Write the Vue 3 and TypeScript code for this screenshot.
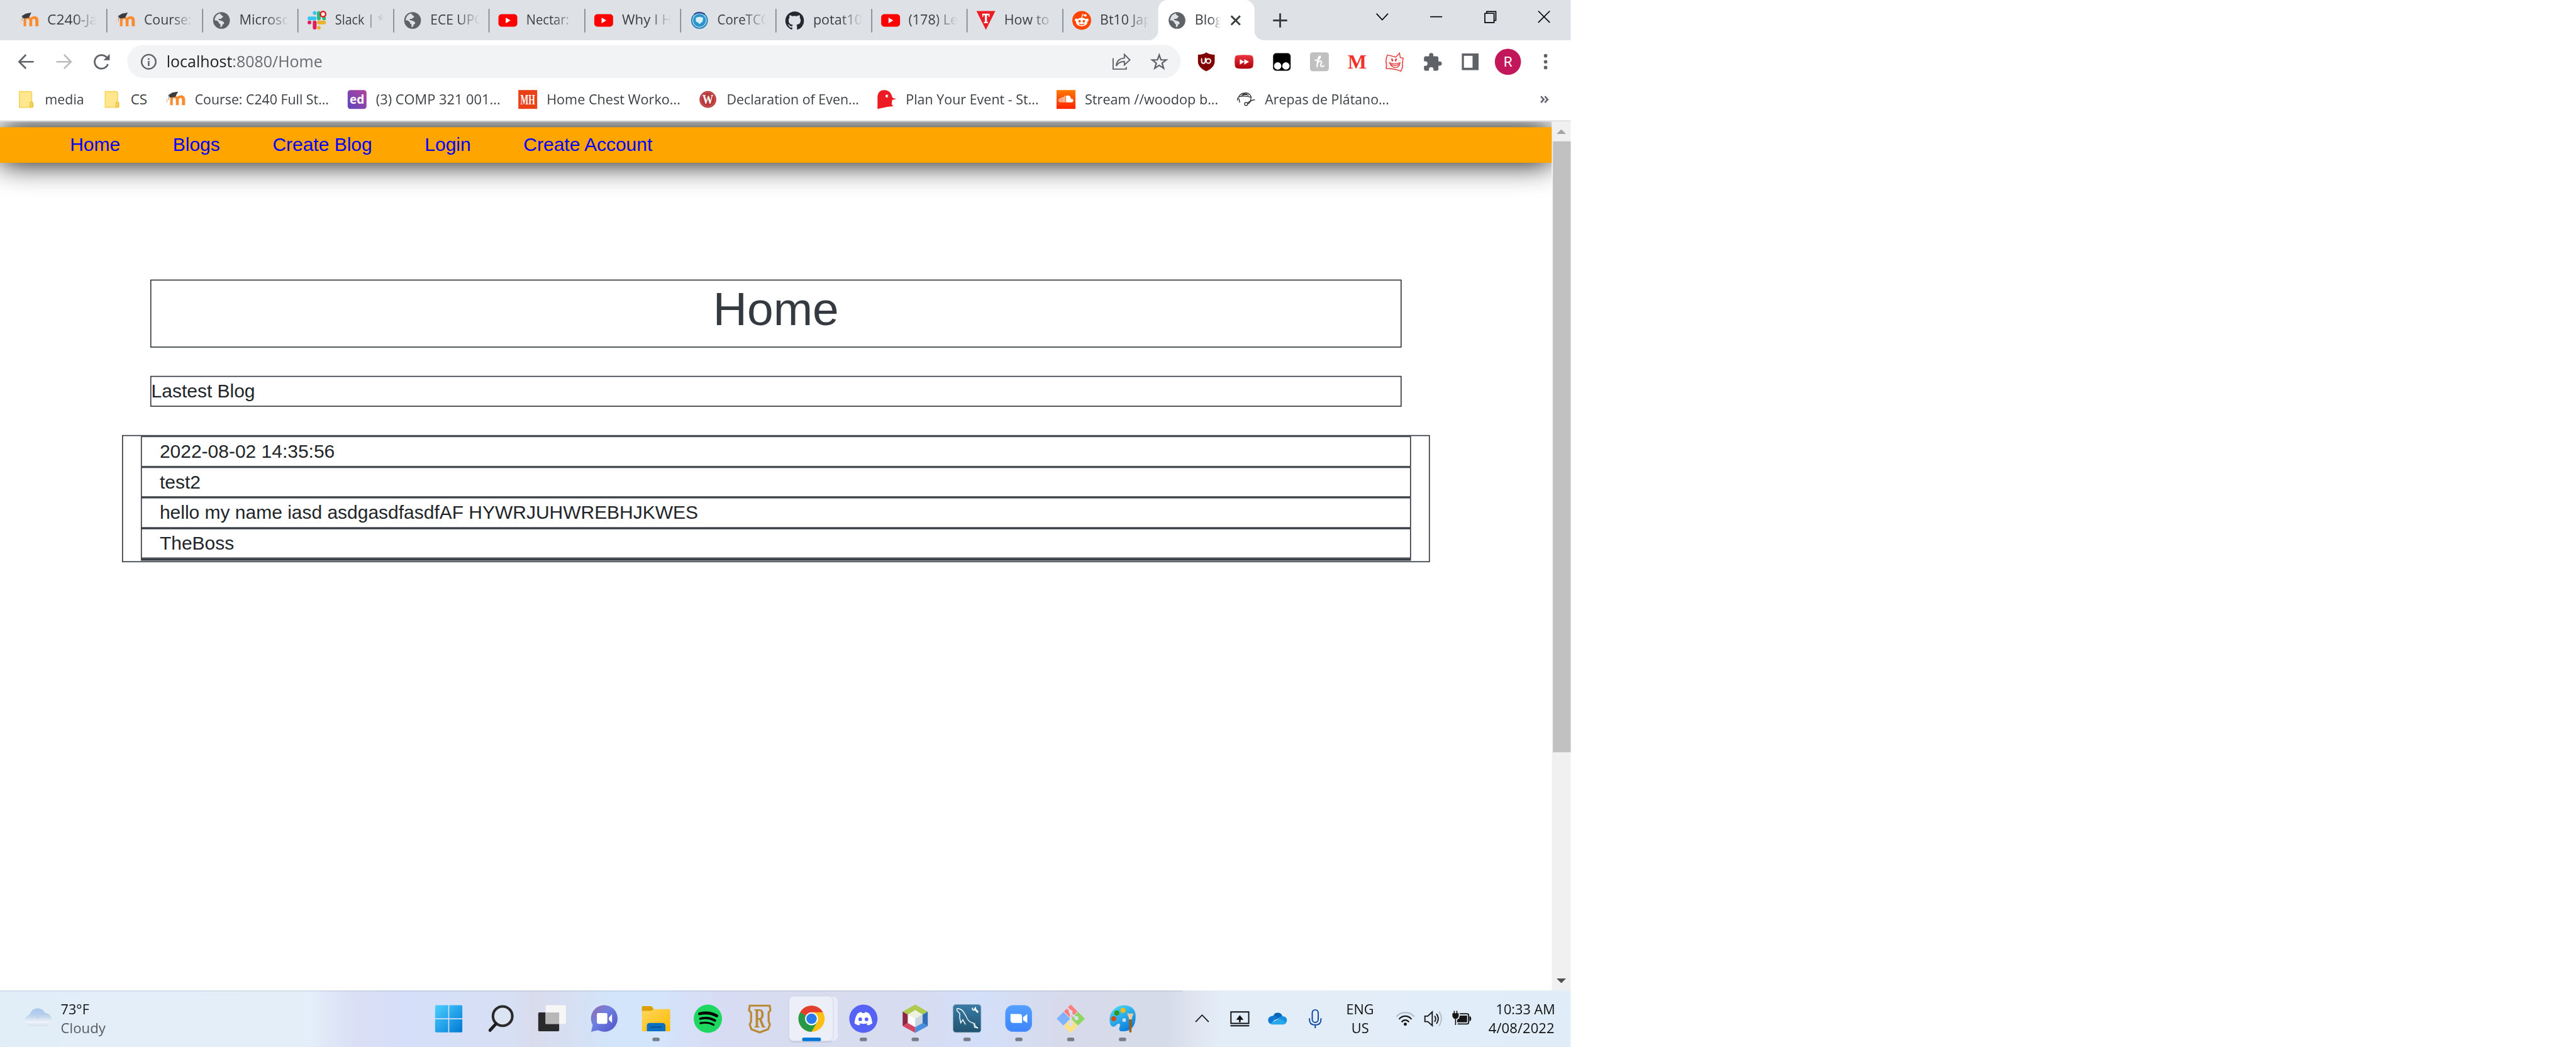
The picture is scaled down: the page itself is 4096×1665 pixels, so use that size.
<script setup lang="ts">
import type { ObjectDirective } from 'vue'

interface Tab { icon: string; title: string; w: number }
interface Bookmark { icon: string; title: string; cell: number; w: number }
interface TaskApp { icon: string; state: 'none' | 'open' | 'active' }

// Condenses a label horizontally so that it occupies the given width.
const fit = (el: HTMLElement, width: number) => {
  el.style.transform = 'none'
  const natural = el.offsetWidth
  if (natural) el.style.transform = `scaleX(${width / natural})`
}
const vFit: ObjectDirective<HTMLElement, number> = {
  mounted: (el, b) => fit(el, b.value),
}

const tabs: Tab[] = [
  { icon: 'moodle', title: 'C240-Ja', w: 96 },
  { icon: 'moodle', title: 'Course:', w: 91 },
  { icon: 'globe', title: 'Microso', w: 97 },
  { icon: 'slack', title: 'Slack | *', w: 94 },
  { icon: 'globe', title: 'ECE UPC', w: 100 },
  { icon: 'youtube', title: 'Nectar: ', w: 88 },
  { icon: 'youtube', title: 'Why I H', w: 96 },
  { icon: 'core', title: 'CoreTCO', w: 102 },
  { icon: 'github', title: 'potat10', w: 94 },
  { icon: 'youtube', title: '(178) Le', w: 95 },
  { icon: 'tee', title: 'How to', w: 86 },
  { icon: 'reddit', title: 'Bt10 Jap', w: 99 },
]

const bookmarks: Bookmark[] = [
  { icon: 'folder', title: 'media', cell: 164, w: 75 },
  { icon: 'folder', title: 'CS', cell: 122, w: 32 },
  { icon: 'moodle', title: 'Course: C240 Full St...', cell: 346, w: 256 },
  { icon: 'ed', title: '(3) COMP 321 001...', cell: 326, w: 238 },
  { icon: 'mh', title: 'Home Chest Worko...', cell: 344, w: 255 },
  { icon: 'wes', title: 'Declaration of Even...', cell: 342, w: 253 },
  { icon: 'bird', title: 'Plan Your Event - St...', cell: 342, w: 254 },
  { icon: 'cloud', title: 'Stream //woodop b...', cell: 344, w: 255 },
  { icon: 'arepa', title: 'Arepas de Plátano...', cell: 350, w: 237 },
]

const extensions = ['ublock', 'skip', 'tamper', 'honey', 'em', 'cat', 'puzzle', 'panel', 'avatar', 'dots']
const windowButtons = ['chevron', 'minimise', 'restore', 'close']
const links: string[] = ['Home', 'Blogs', 'Create Blog', 'Login', 'Create Account']
const blog: string[] = ['2022-08-02 14:35:56', 'test2', 'hello my name iasd asdgasdfasdfAF HYWRJUHWREBHJKWES', 'TheBoss']

const apps: TaskApp[] = [
  { icon: 'windows', state: 'none' },
  { icon: 'search', state: 'none' },
  { icon: 'taskview', state: 'none' },
  { icon: 'chat', state: 'none' },
  { icon: 'explorer', state: 'open' },
  { icon: 'spotify', state: 'none' },
  { icon: 'runeterra', state: 'none' },
  { icon: 'chrome', state: 'active' },
  { icon: 'discord', state: 'open' },
  { icon: 'netbeans', state: 'open' },
  { icon: 'mysql', state: 'open' },
  { icon: 'zoom', state: 'open' },
  { icon: 'git', state: 'open' },
  { icon: 'paint', state: 'open' },
]

// 36 x 36 glyphs
const small: Record<string, string> = {
  moodle: '<path d="M7 29V18q0-8 7.500-8Q18 10 20.500 13Q23 10 27.500 10Q35.500 10 35.500 18V29H29.500V19q0-4-3-4T23.500 19V29H18V19q0-4-3-4t-3 4V29z" fill="#fb8b2c"/><path d="M1 16v8" stroke="#fbd0b0" stroke-width="2.500"/><path d="M3 10L11 5L22 3L17 13L7 14.500z" fill="#3c3c3e"/><path d="M4.500 10v9" stroke="#999" stroke-width="1.300"/>',
  globe: '<circle cx="18" cy="18" r="16" fill="#5f6368"/><path d="M16 4.500c-6 1-11 6-11 13.500h4l4 3.500c0 3 2.500 3 3 4v5.500c3-.5 4-3 4-5.500 3 0 3.500-2 2.500-4-1-2-4-2.500-7-3.500-3-.8-4.500-2-2-3h3c1.500 0 1.500-2 3-2.500 2-1 2-2 0-3.500-2-1-4-2-3.500-4.500z" fill="#dee1e6"/><path d="M24 6c5 3 7.500 8 7 13-3 1-5-.5-5.500-3-3-.5-4-2-3-4 2-.5 2.500-3 1.500-6z" fill="#5f6368"/>',
  slack: '<g stroke-width="7.200" stroke-linecap="round"><path d="M4 14h10M14 4h.01" stroke="#36c5f0"/><path d="M22 4v10M32 14h.01" stroke="#2eb67d"/><path d="M22 22h10M22 32h.01" stroke="#ecb22e"/><path d="M14 22v10M4 22h.01" stroke="#e01e5a"/></g><circle cx="30" cy="6" r="5" fill="#fff" stroke="#e01e1e" stroke-width="3"/>',
  youtube: '<rect y="6" width="36" height="24" rx="6" fill="#f00"/><path d="M14 12.500L23 18L14 23.500z" fill="#fff"/>',
  core: '<circle cx="18" cy="18" r="16" fill="#1f7fb5"/><circle cx="18" cy="18" r="13" fill="#2a94cb" stroke="#b8dcee" stroke-width="1.500"/><path d="M11 13q7-4 14 0l-1 7-6 5-3-3-4-2z" fill="#d5f0fa"/><path d="M8 6q10-6 20 0" stroke="#2c4a90" stroke-width="3" fill="none"/>',
  github: '<path d="M18 1C8 1 0 9 0 18.700c0 7.800 5 14.300 12 16.700.9.100 1.200-.4 1.200-.9v-3.200c-5 1.100-6-2.300-6-2.300-.8-2-2-2.600-2-2.600-1.600-1 .1-1 .1-1 1.800.1 2.800 1.800 2.800 1.800 1.600 2.700 4.200 2 5.200 1.500.2-1.200.6-2 1.100-2.400-4-.4-8.200-2-8.200-8.700 0-2 .7-3.500 1.800-4.700-.2-.5-.8-2.300.2-4.700 0 0 1.500-.5 5 1.800a17 17 0 0 1 9 0c3.400-2.300 5-1.800 5-1.800 1 2.400.4 4.200.2 4.700 1.100 1.200 1.800 2.800 1.800 4.700 0 6.800-4.200 8.200-8.200 8.700.7.600 1.200 1.700 1.200 3.400v5c0 .5.300 1 1.200.9 7-2.400 12-9 12-16.700C36 9 28 1 18 1z" fill="#24292f"/>',
  tee: '<path d="M0 0H36L18 36z" fill="#ec1c24"/><path d="M11 5H25V11H23V8H20V21H22V23H14V21H16V8H13V11H11z" fill="#fff"/>',
  reddit: '<circle cx="18" cy="18" r="18" fill="#ff4500"/><ellipse cx="18" cy="21" rx="11" ry="8" fill="#fff"/><circle cx="7.500" cy="17" r="2.700" fill="#fff"/><circle cx="28.500" cy="17" r="2.700" fill="#fff"/><circle cx="25" cy="8.500" r="2.400" fill="#fff"/><path d="M18 13l1.500-6 5.500 1.200" stroke="#fff" stroke-width="1.600" fill="none"/><circle cx="14" cy="19.500" r="2.300" fill="#ff4500"/><circle cx="22" cy="19.500" r="2.300" fill="#ff4500"/><path d="M13 24.500q5 3.500 10 0" stroke="#ff4500" stroke-width="1.600" fill="none"/>',
  folder: '<path d="M5 3H26a2.500 2.500 0 0 1 2.500 2.500V23q2.500.5 2.500 4v3a3 3 0 0 1-3 3H5z" fill="#ffe68f" stroke="#f5d55c" stroke-width="2"/><path d="M25.500 31v-5q0-3 2.500-3t2.300 3v6H27q-1.500 0-1.500-2z" fill="#f9da66" stroke="#e6bd38" stroke-width="1.500"/>',
  ed: '<defs><linearGradient id="edg" x1="1" y1="0" x2="0" y2="1"><stop offset="0" stop-color="#b3429c"/><stop offset="1" stop-color="#5c46bd"/></linearGradient></defs><rect width="36" height="36" rx="5" fill="url(#edg)"/><text x="18" y="26.500" text-anchor="middle" font-size="23" font-weight="700" fill="#fff" textLength="28" lengthAdjust="spacingAndGlyphs">ed</text>',
  mh: '<rect width="36" height="36" fill="#ea4015"/><text x="18" y="27" text-anchor="middle" font-size="27" font-weight="700" font-family="Liberation Serif, serif" fill="#fff" textLength="28" lengthAdjust="spacingAndGlyphs">MH</text>',
  wes: '<circle cx="18" cy="18" r="16" fill="#b8393b"/><circle cx="18" cy="18" r="13.500" fill="none" stroke="#cf6d6e" stroke-width="1"/><text x="18" y="26.500" text-anchor="middle" font-size="25" font-weight="700" font-family="Liberation Serif, serif" fill="#fff" textLength="21" lengthAdjust="spacingAndGlyphs">W</text>',
  bird: '<path d="M0 36V12C1 4 6 0 12 0C19 0 24 3 26 8L29 15L36 17L28 19L27 27L30 31L20 32z" fill="#ed1c24"/><circle cx="18" cy="11.500" r="2.800" fill="#fff"/><path d="M19 11.500h2" stroke="#333" stroke-width="1.500"/>',
  cloud: '<defs><linearGradient id="scg" x1="0" y1="0" x2="0" y2="1"><stop offset="0" stop-color="#ff7800"/><stop offset="1" stop-color="#ff2300"/></linearGradient></defs><rect width="36" height="36" fill="url(#scg)"/><path d="M5 17v6M7.800 15v8.500M10.600 14v9.500M13.400 13v10.500M16 11v12.500" stroke="#fff" stroke-width="1.500"/><path d="M18 23.500V11q8-2.500 9.500 5.500Q32 16 32 20q0 3.500-3.500 3.500z" fill="#fff"/>',
  arepa: '<g fill="none" stroke="#222" stroke-width="1.500"><path d="M4 13q3-7 12-7.500T28 14q-11-4-24-1z"/><path d="M9 11q6-4 14-1M11 8.500q5-2.500 9-.5"/><path d="M4 14q-3 1-2.500 6M4 16l2 8M27 15v5q-2 5-6 6.500"/><circle cx="18" cy="26.500" r="3"/><path d="M21 25q3-5 14-6.500"/></g>',
  ublock: '<path d="M18 0Q24 4.500 34 4.500V17C34 27 25 33 18 36C11 33 2 27 2 17V4.500Q12 4.500 18 0z" fill="#800000"/><path d="M9 11.500v5.500q0 4 3.500 4t3.500-4v-5.500" fill="none" stroke="#fff" stroke-width="2.300"/><circle cx="22" cy="16.500" r="4.200" fill="none" stroke="#fff" stroke-width="2.300"/><path d="M17 10v7" stroke="#fff" stroke-width="2"/>',
  skip: '<defs><linearGradient id="skg" x1="0" y1="0" x2="0" y2="1"><stop offset="0" stop-color="#ee3540"/><stop offset="1" stop-color="#a90008"/></linearGradient></defs><path d="M6 5.500Q18 4 30 5.500Q35 6 35.500 11Q36.500 18 35.500 25Q35 30 30 30.700Q18 32 6 30.700Q1 30 .5 25Q-.5 18 .5 11Q1 6 6 5.500z" fill="url(#skg)"/><path d="M10 13L18.500 18L10 23.500zM18.500 13L27.500 18L18.500 23.500z" fill="#fff"/>',
  tamper: '<rect x="1.500" y="1.500" width="33.500" height="33.500" rx="6" fill="#000"/><circle cx="10.300" cy="26" r="7" fill="#fff"/><circle cx="26" cy="26" r="7" fill="#fff"/>',
  honey: '<rect width="36" height="36" rx="5" fill="#c0c0c0"/><path d="M10 15q7 0 9-4.500t-1.500-2.500q-3 4-4 19.500M13.500 23q3-7 6.500-6.500t1 5.500 2.500 5q2 0 3-1.500" fill="none" stroke="#fff" stroke-width="2.600" stroke-linecap="round"/>',
  em: '<text x="18" y="31.500" text-anchor="middle" font-size="38" font-weight="700" font-family="Liberation Serif, serif" fill="#f2302c" textLength="36" lengthAdjust="spacingAndGlyphs">M</text>',
  cat: '<path d="M4 5L20 9L27 1.500L28.500 10L34 11Q32 22 33 28L29.500 36Q18 31 1.500 31Q3 23 1 17Q1.500 10 4 5z" fill="#fbf3f3" stroke="#e03a3a" stroke-width="1.700"/><path d="M12 12l2 5M21 12l-2 5" stroke="#d22" stroke-width="2.500"/><path d="M8 20q9 4 20 0-2 9-8 9-8 0-12-9zM10 23q9 4 16 0" fill="none" stroke="#e03a3a" stroke-width="1.600"/>',
  puzzle: '<path transform="translate(-1.500 -.5) scale(1.620)" d="M20.500 11H19V7c0-1.100-.9-2-2-2h-4V3.500a2.500 2.500 0 0 0-5 0V5H4c-1.100 0-2 .9-2 2v3.800h1.500a2.700 2.700 0 0 1 0 5.400H2V20c0 1.100.9 2 2 2h3.800v-1.500a2.700 2.700 0 0 1 5.400 0V22H17c1.100 0 2-.9 2-2v-4h1.500a2.500 2.500 0 0 0 0-5z" fill="#5f6368"/>',
  panel: '<path d="M2 2H34V34H2zM6 6.500V29.500H22.500V6.500z" fill="#5f6368" fill-rule="evenodd"/>',
  dots: '<g fill="#5f6368"><circle cx="18" cy="6.500" r="3.400"/><circle cx="18" cy="18" r="3.400"/><circle cx="18" cy="29" r="3.400"/></g>',
  back: '<path d="M32.500 18H5M17.500 4.500L4.500 18L17.500 31" fill="none" stroke="#5f6368" stroke-width="3.200"/>',
  forward: '<path d="M3.500 18H31M18.500 4.500L31.500 18L18.500 31" fill="none" stroke="#babcbe" stroke-width="3.200"/>',
  reload: '<path d="M30 22.500A13 13 0 1 1 27.500 9.500" fill="none" stroke="#5f6368" stroke-width="3.300"/><path d="M33.500 3V15H21.500z" fill="#5f6368"/>',
  info: '<circle cx="18" cy="18" r="13.600" fill="none" stroke="#5f6368" stroke-width="2.900"/><path d="M18 16.500V26M18 11v3.500" stroke="#5f6368" stroke-width="3"/>',
  share: '<path d="M2 11V32H27V28" fill="none" stroke="#5f6368" stroke-width="2.300"/><path d="M8 26Q9 12 23.500 11V4L34 14.500L23.500 24V17.500Q13 17.500 8 26z" fill="none" stroke="#5f6368" stroke-width="2.300"/>',
  star: '<path d="M18 5L21.300 14.200L31.500 14.500L23.500 20.500L26.500 30.500L18 24.800L9.500 30.500L12.500 20.500L4.500 14.500L14.700 14.200z" fill="none" stroke="#5f6368" stroke-width="2.700"/>',
  chevron: '<path d="M7 12L18 24L29 12" fill="none" stroke="#000" stroke-width="2"/>',
  minimise: '<path d="M6.500 18H29.500" stroke="#000" stroke-width="2"/>',
  restore: '<path d="M8 11.500H25.500V29H8zM11.500 11V8H29V25H26" fill="none" stroke="#000" stroke-width="2"/>',
  close: '<path d="M7 7L29 29M29 7L7 29" stroke="#000" stroke-width="2"/>',
  cross: '<path d="M9.500 9.500L26.500 26.500M26.500 9.500L9.500 26.500" stroke="#3c4043" stroke-width="3.500"/>',
  plus: '<path d="M18 4.500V31.500M4.500 18H31.500" stroke="#3c4043" stroke-width="3.500"/>',
  more: '<path d="M11 12L16.500 18L11 24M18.500 12L24 18L18.500 24" fill="none" stroke="#5f6368" stroke-width="3"/>',
  tchevron: '<path d="M5.500 24L18 11L30.500 24" fill="none" stroke="#1b1b1b" stroke-width="2.200"/>',
  upload: '<path d="M1 5H35V27H1zM0 31.500H36" fill="none" stroke="#111" stroke-width="2.300"/><path d="M18 11L25 20H19.500V25H16.500V20H11z" fill="#111"/>',
  onedrive: '<path d="M10 13Q12 6 19 6.500Q26 7 27.500 14L14 20z" fill="#0364b8"/><path d="M8 12.500q6-2 10 2.500L5 28Q0 26 0 20.500Q0 14 8 12.500z" fill="#0f78d4"/><path d="M17 16l10-3q9 0 9 8.500l-2 5z" fill="#1490df"/><path d="M4 27L21 17.500L35 25q-1.500 4-6 4H7q-2 0-3-2z" fill="#28a8ea"/>',
  mic: '<rect x="12.300" y="1" width="11.400" height="24" rx="5.700" fill="none" stroke="#0b47a1" stroke-width="2.300"/><path d="M7 17v2.500Q7 30 18 30T29 19.500V17M18 30v6" fill="none" stroke="#0b47a1" stroke-width="2.300"/>',
  wifi: '<path d="M1 14Q8 6 18 6T35 14" fill="none" stroke="#b4bdc6" stroke-width="2.600"/><path d="M6 19Q11 13 18 13T30 19M11 24.500Q14 20.500 18 20.500T25 24.500" fill="none" stroke="#161616" stroke-width="2.600"/><circle cx="18" cy="28.500" r="3" fill="#161616"/>',
  sound: '<path d="M1.500 13H7L15.500 5V31L7 23.500H1.500zM20 12.500q4 5.500 0 11.500M23.500 8.500q7 9.500 0 19" fill="none" stroke="#161616" stroke-width="2.300"/><path d="M28.500 4q9 14 0 28" fill="none" stroke="#b4bdc6" stroke-width="2.300"/>',
  battery: '<path d="M3.500 3v6M8.500 3v6M6 16v14" stroke="#161616" stroke-width="2"/><path d="M0 7.500H12V13q-1 5-6 5T0 13z" fill="#161616"/><path d="M14 8.500H28q3 0 3 3V25q0 3-3 3H10" fill="none" stroke="#161616" stroke-width="2.300"/><path d="M14 12H28V25H9V20Q14 18 14 12zM32.500 13.500H34q2 1 2 4.500t-2 4.500h-1.500z" fill="#161616"/>',
}

// 54 x 54 taskbar glyphs
const large: Record<string, string> = {
  windows: '<defs><linearGradient id="wg" x1="0" y1="0" x2="1" y2="1"><stop offset="0" stop-color="#4bd0ff"/><stop offset="1" stop-color="#0078d4"/></linearGradient></defs><path d="M3 1H26V26H1V3Q1 1 3 1zM28 1H51Q53 1 53 3V26H28zM1 28H26V53H3Q1 53 1 51zM28 28H53V51Q53 53 51 53H28z" fill="url(#wg)"/>',
  search: '<ellipse cx="31" cy="22" rx="18.500" ry="18.500" fill="#dce4f3" stroke="#2a2a2a" stroke-width="5"/><path d="M18 37L7 49" stroke="#1d1d1d" stroke-width="6" stroke-linecap="round"/>',
  taskview: '<rect x="0" y="15" width="40" height="36" rx="2" fill="#2a2a2a"/><rect x="14" y="1" width="39" height="36" rx="2" fill="#f6f6f6"/><rect x="14" y="15" width="26" height="22" fill="#b8b8b8"/>',
  chat: '<defs><linearGradient id="chg" x1="0" y1="0" x2="1" y2="1"><stop offset="0" stop-color="#9a67a8"/><stop offset=".4" stop-color="#7080e0"/><stop offset="1" stop-color="#4f52c6"/></linearGradient></defs><path d="M27 1A25 25 0 0 1 27 52Q21 52 15 49L2 52L5 39A25.500 25.500 0 0 1 27 1z" fill="url(#chg)"/><rect x="13" y="16" width="20" height="21" rx="3" fill="#fff"/><path d="M36 25L42 18V35L36 29z" fill="#fff"/>',
  explorer: '<defs><linearGradient id="exg" x1="0" y1="0" x2="1" y2="1"><stop offset="0" stop-color="#ffd75e"/><stop offset="1" stop-color="#fdb900"/></linearGradient></defs><path d="M0 4Q0 3 2 3H17Q19 3 22 8V14H0z" fill="#dd9f00"/><path d="M0 12H17L23 8.500H52Q54 8.500 54 11V51H0z" fill="url(#exg)"/><path d="M9.500 51V40Q10 35 15 35H39Q44 35 45 40V51z" fill="#0b6fc2"/><path d="M17 43H38" stroke="#084b8a" stroke-width="2"/>',
  spotify: '<circle cx="27" cy="27" r="27" fill="#1ed760"/><g fill="none" stroke="#000" stroke-linecap="round"><path d="M11 17.500Q29 13 44 21.500" stroke-width="5.500"/><path d="M12.500 27Q28 23 40.500 30.500" stroke-width="4.500"/><path d="M13 35.500Q27 32.500 38 38.500" stroke-width="3.700"/></g>',
  runeterra: '<path d="M8 2H46L47.500 11L44 15V32L46.500 38L43 47L27 53L11 47L8 38L10.500 32V15L6.500 11z" fill="none" stroke="#b88a35" stroke-width="3.800"/><text x="27" y="44" text-anchor="middle" font-family="Liberation Serif, serif" font-size="54" font-weight="700" fill="#b88a35" textLength="21" lengthAdjust="spacingAndGlyphs">R</text>',
  chrome: '<circle cx="27" cy="27" r="25" fill="#fbc013"/><path d="M27 27L5.350 14.500A25 25 0 0 0 27 52L38 33z" fill="#279847"/><path d="M27 27L5.350 14.500A25 25 0 0 1 48.650 14.500H27z" fill="#e43e2f"/><circle cx="27" cy="27" r="12.500" fill="#fff"/><circle cx="27" cy="27" r="10" fill="#2a7bec"/>',
  discord: '<circle cx="27" cy="27" r="27" fill="#5662f6"/><path d="M16 17Q20 14.500 23.500 14L24.500 16H29.500L30.500 14Q34 14.500 38 17Q43.500 25 44 36Q39 39.500 35 39.500L33 36.500L36 34.500Q27 39 18 34.500L21 36.500L19 39.500Q15 39.500 10 36Q10.500 25 16 17z" fill="#fff"/><circle cx="21" cy="28" r="3.500" fill="#5662f6"/><circle cx="33" cy="28" r="3.500" fill="#5662f6"/>',
  netbeans: '<path d="M27 0L51 13.500L41 19L27 10.500L13 19L3 13.500z" fill="#b0c94f"/><path d="M3 13.500L13 19V35L3 41z" fill="#8b2846"/><path d="M3 41L13 35L27 43V54z" fill="#d34664"/><path d="M27 54V43L41 35L51 41z" fill="#498fdd"/><path d="M51 41L41 35V19L51 13.500z" fill="#326db7"/><path d="M27 10.500L41 19L27 27L13 19z" fill="#edf1df"/><path d="M13 19L27 27V43L13 35z" fill="#fff"/><path d="M41 19L27 27V43L41 35z" fill="#cad6e2"/>',
  mysql: '<defs><linearGradient id="mg" x1="0" y1="0" x2="0" y2="1"><stop offset="0" stop-color="#3a7ba5"/><stop offset="1" stop-color="#1f5470"/></linearGradient></defs><rect x=".5" y="0" width="53" height="53" rx="5" fill="url(#mg)" stroke="#7898ad"/><path d="M8 12Q6 6 12 8Q17 9 21 15L25 22Q29 33 38 35L42 37L40 39L48 45L41 43L43 39M8 12L13 17V25L15 35L19 29L24 38" fill="none" stroke="#fff" stroke-width="1.700"/><path d="M41 7L48 15" stroke="#fff" stroke-width="3.500" fill="none"/><path d="M37 6q0 5 4 4.500t1.500-6" stroke="#fff" stroke-width="2" fill="none"/>',
  zoom: '<defs><linearGradient id="zg" x1="0" y1="0" x2="0" y2="1"><stop offset="0" stop-color="#539fff"/><stop offset="1" stop-color="#3e86ff"/></linearGradient></defs><rect x="1" y="1" width="51" height="51" rx="15" fill="url(#zg)"/><path d="M11 18H28Q33 18 33 23V35H16Q11 35 11 30zM35 24L43 18V35L35 30z" fill="#fff"/>',
  git: '<path d="M27 0L40 13L27 26L14 13z" fill="#ff7d7d"/><path d="M41 14L54 27L41 40L28 27z" fill="#8fd661"/><path d="M27 28L40 41L27 54L14 41z" fill="#ffe27f"/><path d="M13 14L26 27L13 40L0 27z" fill="#7eb2ff"/><path d="M19 5L27 13V38M27 17L38 25" fill="none" stroke="#d9dfec" stroke-width="3"/><circle cx="27" cy="14" r="3.500" fill="#d9dfec"/><circle cx="27" cy="38" r="4" fill="#d9dfec"/><circle cx="38" cy="26" r="4" fill="#d9dfec"/>',
  paint: '<defs><linearGradient id="pg" x1="0" y1="0" x2=".6" y2="1"><stop offset="0" stop-color="#4fe2fb"/><stop offset="1" stop-color="#0d7ddb"/></linearGradient></defs><path d="M31 1Q52 3 52 22Q52 52 25 51Q19 50 21 44Q24 37 20 36Q16 37 13 41Q6 45 3 36Q0 22 8 12Q17 1 31 1zM30 26a3.500 3.500 0 1 0 .1 7a3.500 3.500 0 1 0-.1-7z" fill="url(#pg)" fill-rule="evenodd"/><circle cx="10" cy="27" r="4.800" fill="#d14b16"/><circle cx="16" cy="16" r="4.800" fill="#2f9a10"/><circle cx="28" cy="11" r="4.800" fill="#fdb813"/><path d="M35.500 17H48L45 25V28H39V25z" fill="#e8cba0"/><path d="M39.500 28H44.500L44 53H40z" fill="#a45c08"/>',
}
</script>

<template>
  <div class="viewport">
    <div class="screen">
      <header class="tabstrip">
        <div v-for="(t, i) in tabs" :key="i" class="tab" :class="{ last: i === tabs.length - 1 }">
          <svg class="ic" viewBox="0 0 36 36" v-html="small[t.icon]" />
          <span class="title"><span v-fit="t.w" class="fit">{{ t.title }}</span></span>
        </div>
        <div class="tab current">
          <svg class="ic" viewBox="0 0 36 36" v-html="small.globe" />
          <span class="title short"><span v-fit="53" class="fit">Blog</span></span>
          <svg class="ic" viewBox="0 0 36 36" v-html="small.cross" />
        </div>
        <svg class="ic plus" viewBox="0 0 36 36" v-html="small.plus" />
        <div class="window-buttons">
          <span v-for="b in windowButtons" :key="b" class="wb"><svg class="ic" viewBox="0 0 36 36" v-html="small[b]" /></span>
        </div>
      </header>

      <div class="toolbar">
        <span v-for="n in ['back', 'forward', 'reload']" :key="n" class="cell"><svg class="ic" viewBox="0 0 36 36" v-html="small[n]" /></span>
        <div class="omnibox">
          <svg class="ic" viewBox="0 0 36 36" v-html="small.info" />
          <span v-fit="298" class="fit url"><b>localhost</b>:8080/Home</span>
          <span class="cell push"><svg class="ic" viewBox="0 0 36 36" v-html="small.share" /></span>
          <span class="cell"><svg class="ic" viewBox="0 0 36 36" v-html="small.star" /></span>
        </div>
        <span v-for="n in extensions" :key="n" class="cell">
          <span v-if="n === 'avatar'" class="avatar">R</span>
          <svg v-else class="ic" viewBox="0 0 36 36" v-html="small[n]" />
        </span>
      </div>

      <div class="bookmarks">
        <div v-for="b in bookmarks" :key="b.title" class="bookmark" :style="{ width: b.cell + 'px' }">
          <svg class="ic" viewBox="0 0 36 36" v-html="small[b.icon]" />
          <span v-fit="b.w" class="fit">{{ b.title }}</span>
        </div>
        <svg class="ic more" viewBox="0 0 36 36" v-html="small.more" />
      </div>

      <div class="content">
        <div class="page">
          <nav class="nav">
            <a v-for="l in links" :key="l">{{ l }}</a>
          </nav>
          <main>
            <h1>Home</h1>
            <p class="latest">Lastest Blog</p>
            <section class="blog">
              <div class="rows">
                <div v-for="r in blog" :key="r" class="row">{{ r }}</div>
                <div class="row empty" />
              </div>
            </section>
          </main>
        </div>
        <div class="scrollbar">
          <i class="arrow up" />
          <i class="thumb" />
          <i class="arrow down" />
        </div>
      </div>

      <footer class="taskbar">
        <div class="weather">
          <svg class="sky" width="54" height="36" viewBox="0 0 54 36">
            <defs>
              <linearGradient id="w1" x1="0" y1="0" x2="0" y2="1"><stop offset="0" stop-color="#a9c6ea" /><stop offset="1" stop-color="#cfe0f8" /></linearGradient>
              <linearGradient id="w2" x1="0" y1="0" x2="0" y2="1"><stop offset="0" stop-color="#adc8e2" /><stop offset=".7" stop-color="#eef2fa" /><stop offset="1" stop-color="#d5dfef" /></linearGradient>
            </defs>
            <circle cx="26" cy="16.500" r="15.500" fill="url(#w1)" />
            <path d="M12 35A11 11 0 1 1 22 18L28 22A12.500 12.500 0 1 1 43 35z" fill="url(#w2)" />
          </svg>
          <div class="lines">
            <span v-fit="54" class="fit">73°F</span>
            <span v-fit="86" class="fit dim">Cloudy</span>
          </div>
        </div>
        <div class="apps">
          <div v-for="a in apps" :key="a.icon" class="app" :class="a.state">
            <svg class="big" viewBox="0 0 54 54" v-html="large[a.icon]" />
            <i v-if="a.state !== 'none'" class="mark" />
          </div>
        </div>
        <div class="tray">
          <svg class="ic" viewBox="0 0 36 36" v-html="small.tchevron" />
          <svg class="ic t2" viewBox="0 0 36 36" v-html="small.upload" />
          <svg class="ic t3" viewBox="0 0 36 36" v-html="small.onedrive" />
          <svg class="ic t4" viewBox="0 0 36 36" v-html="small.mic" />
          <div class="lines lang">
            <span v-fit="53" class="fit">ENG</span>
            <span v-fit="34" class="fit">US</span>
          </div>
          <svg class="ic t5" viewBox="0 0 36 36" v-html="small.wifi" />
          <svg class="ic t6" viewBox="0 0 36 36" v-html="small.sound" />
          <svg class="ic t6" viewBox="0 0 36 36" v-html="small.battery" />
          <div class="lines clock">
            <span v-fit="113" class="fit">10:33 AM</span>
            <span v-fit="126" class="fit">4/08/2022</span>
          </div>
        </div>
      </footer>
    </div>
  </div>
</template>

<style>
body { background: #fff; }
</style>

<style scoped>
.viewport { width: 4096px; height: 1665px; overflow: hidden; background: #fff; }
.screen { width: 3000px; height: 2000px; transform: scale(.83252, .8325); transform-origin: 0 0; font: 27px/36px "Open Sans", "Noto Sans", sans-serif; color: #3c4043; display: flex; flex-direction: column; }
.ic { width: 36px; height: 36px; flex: none; display: block; overflow: visible; }
.fit { display: inline-block; white-space: pre; transform-origin: 0 50%; flex: none; }

.tabstrip { height: 77px; background: #dee1e6; display: flex; align-items: center; padding-left: 21.500px; box-sizing: border-box; flex: none; }
.tab { width: 182.600px; height: 77px; box-sizing: border-box; display: flex; align-items: center; padding-left: 18px; flex: none; position: relative; }
.tab:first-child { padding-left: 16px; }
.tab:not(.last):not(.current)::after { content: ""; position: absolute; right: -1px; top: 17px; width: 2px; height: 45px; background: #808488; }
.title { width: 94px; margin-left: 16.500px; white-space: pre; margin-top: -3px; flex: none; mask-image: linear-gradient(90deg, #000 55%, transparent 100%); }
.title.short { width: 50px; mask-image: linear-gradient(90deg, #000 60%, transparent 100%); }
.current { background: #fff; border-radius: 18px 18px 0 0; width: 184px; margin-left: -1px; padding-left: 18px; }
.current .title { margin-left: 16px; }
.current .ic:last-child { margin-left: 10px; }
.current::before, .current::after { content: ""; position: absolute; bottom: 0; width: 18px; height: 18px; }
.current::before { left: -18px; background: radial-gradient(circle at 0 0, transparent 17.500px, #fff 18px); }
.current::after { right: -18px; background: radial-gradient(circle at 100% 0, transparent 17.500px, #fff 18px); }
.plus { margin-left: 31px; }
.window-buttons { display: flex; margin-left: auto; margin-top: -13px; }
.wb { width: 103px; display: flex; justify-content: center; }

.toolbar { height: 81px; padding-left: 13.500px; display: flex; align-items: center; background: #fff; flex: none; }
.cell { width: 72px; flex: none; display: flex; justify-content: center; }
.omnibox { width: 2012px; height: 63px; border-radius: 32px; background: #f1f3f4; margin: 0 13px 0 13.500px; padding: 0 5px 0 23px; box-sizing: border-box; display: flex; align-items: center; flex: none; }
.url { font-size: 31.500px; margin: -2px 0 0 16px; color: #696c70; }
.url b { font-weight: 400; color: #1d1e20; }
.push { margin-left: auto; }
.avatar { width: 50px; height: 50px; margin: -1px 0; border-radius: 50%; background: #c2185b; color: #fff; font: 27px/50px Roboto, sans-serif; text-align: center; }

.bookmarks { height: 74px; padding: 0 25px 8px 32px; box-sizing: border-box; display: flex; align-items: center; border-bottom: 2px solid #dadbdd; flex: none; background: #fff; }
.bookmark { display: flex; align-items: center; gap: 17.500px; flex: none; }
.bookmark .fit { margin-top: -3px; }
.more { margin-left: auto; margin-right: 7px; }

.content { height: 1660px; display: flex; flex: none; }
.page { width: 2964px; overflow: hidden; font: 36px/54px "Liberation Sans", Arial, sans-serif; color: #212529; background: #fff; }
.nav { margin-top: 11px; height: 68px; background: #ffa500; box-shadow: 0 0 56px #000; display: flex; align-items: center; gap: 100.500px; padding-left: 133.500px; }
.nav a { color: #00f; position: relative; top: -1px; }
h1 { margin: 223px 287px 0; height: 126px; border: 2px solid #343a40; font-size: 90px; line-height: 108px; font-weight: 400; color: #343a40; text-align: center; }
.latest { margin: 54px 287px 0; height: 55px; border: 2px solid #343a40; }
.blog { margin: 54px 233px 0; height: 239px; border: 2px solid #343a40; padding: 0 34px; }
.row { height: 54.500px; border: 2px solid #343a40; padding-left: 34px; }
.row.empty { height: 0; }
.scrollbar { width: 36px; background: #f0f0f0; display: flex; flex-direction: column; align-items: center; box-sizing: border-box; padding: 15px 0 14px; }
.arrow { width: 18px; height: 9px; background: #a3a3a3; clip-path: polygon(50% 0, 100% 100%, 0 100%); }
.arrow.down { background: #505050; clip-path: polygon(0 0, 100% 0, 50% 100%); margin-top: auto; }
.thumb { width: 34px; height: 1167px; background: #c1c1c1; margin: 14px 0 0 2px; }

.taskbar { height: 108px; flex: none; position: relative; display: flex; align-items: center; color: #111; background: linear-gradient(90deg, #e1edf7 0, #e4eef9 590px, #dadff5 680px, #d5dff9 780px, #d6dff3 980px, #d9dbec 1020px, #d2e5fb 1170px, #d3e5fb 1250px, #d7dcf4 1370px, #d8dcee 1560px, #d7dcf0 1740px, #d3dff9 1870px, #d7daea 2040px, #d5dbe9 2230px, #dfe4f0 2280px, #e3edf7 2330px, #e0edf9 3000px); }
.taskbar::before { content: ""; position: absolute; left: 0; top: 0; width: 2258px; height: 2px; background: rgba(100, 120, 150, .16); }
.weather { display: flex; align-items: center; padding-left: 46px; width: 762px; box-sizing: border-box; gap: 16px; flex: none; }
.sky { margin-top: -6px; }
.lines { display: flex; flex-direction: column; align-items: flex-start; }
.dim { color: #55595e; }
.apps { display: flex; margin-left: 45.500px; flex: none; }
.app { width: 99px; height: 108px; flex: none; display: flex; align-items: center; justify-content: center; position: relative; }
.big { width: 54px; height: 54px; overflow: visible; position: relative; }
.mark { position: absolute; left: 42.500px; top: 90px; width: 14px; height: 7px; border-radius: 4px; background: #787d87; }
.active::before { content: ""; position: absolute; left: 6px; top: 11px; width: 85px; height: 86px; border-radius: 9px; background: #f1f3fb; opacity: .8; box-shadow: 9px 0 0 -1px #eef0f8, 0 2px 1px #c3c9da; }
.active::after { content: ""; position: absolute; left: 5px; top: 10px; width: 86px; height: 87px; border-radius: 10px; border: 1px solid #ccd2e6; box-sizing: border-box; }
.active .mark { left: 31.500px; width: 36px; background: #0078d7; z-index: 1; }
.tray { display: flex; align-items: center; width: 723px; margin-left: auto; flex: none; }
.tray > .ic:first-child { margin-left: 1px; }
.t2 { margin-left: 35.500px; }
.t3 { margin-left: 36px; }
.t4 { margin-left: 36px; }
.lang { margin-left: 41px; width: 54px; }
.lang .fit:last-child { margin-left: 10px; }
.t5 { margin-left: 41px; }
.t6 { margin-left: 18px; }
.clock { margin-left: 33px; }
.clock .fit:first-child { margin-left: 14px; }
</style>
